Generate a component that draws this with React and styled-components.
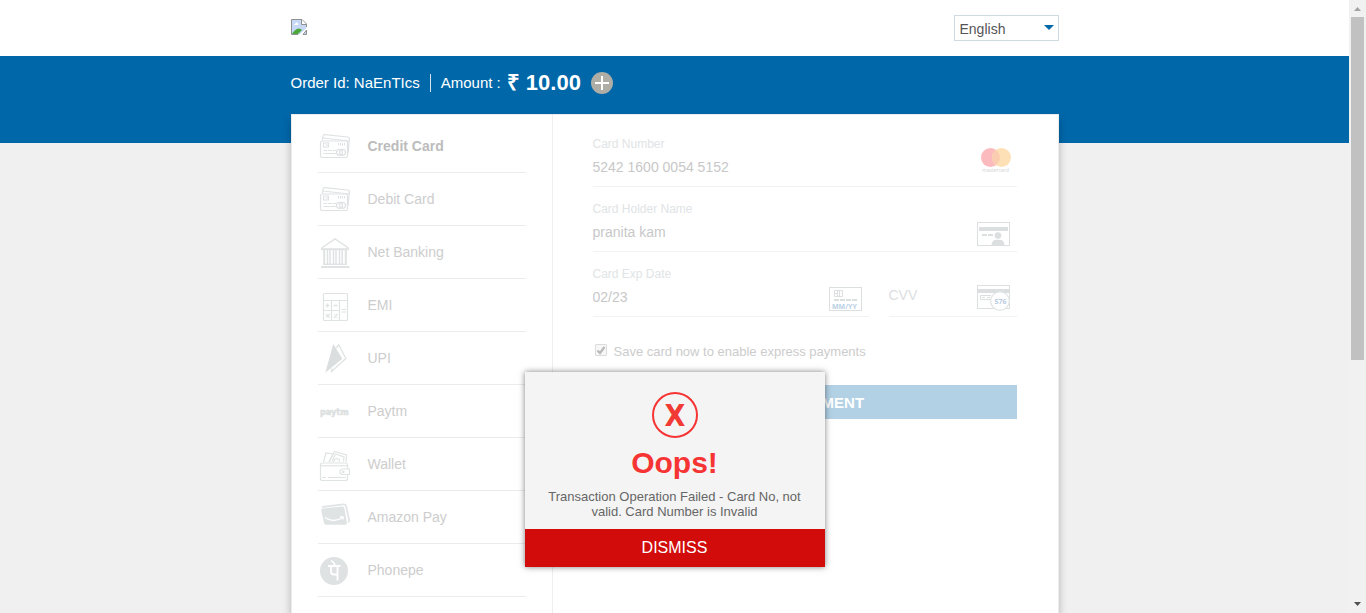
import React from "react";
import styled, { createGlobalStyle, css } from "styled-components";

const GlobalStyle = createGlobalStyle`
  *, *::before, *::after { box-sizing: border-box; }
  html, body { margin: 0; padding: 0; }
  body {
    background: #f0f0f0;
    font-family: "Liberation Sans", Arial, sans-serif;
    font-size: 14px;
    color: #555;
  }
  button, input, select { font-family: inherit; }
`;

const Page = styled.div`
  display: grid;
  grid-template-columns: 1fr 17px;
  height: 100vh;
  overflow: hidden;
`;

const Main = styled.main`
  min-width: 0;
  overflow: hidden;
`;

const Container = styled.div`
  display: flex;
  align-items: center;
  justify-content: ${(p) => (p.$between ? "space-between" : "flex-start")};
  width: 100%;
  max-width: 768px;
  margin: 0 auto;
`;

const Header = styled.header`
  display: flex;
  height: 56px;
  background: #fff;
`;

const Logo = styled.a`
  display: flex;
  padding-bottom: 2px;
`;

const LanguageBox = styled.div`
  position: relative;
  width: 105px;

  &::after {
    content: "";
    position: absolute;
    top: 10px;
    right: 5px;
    border: 5px solid transparent;
    border-top-color: #0067a9;
    border-bottom: 0;
    pointer-events: none;
  }
`;

const LanguageSelect = styled.select`
  display: block;
  width: 100%;
  height: 26px;
  padding: 1px 5px 0;
  border: 1px solid #cfdbe1;
  border-radius: 0;
  background: #fff;
  color: #555;
  font-size: 14px;
  appearance: none;
`;

const OrderBar = styled.section`
  height: 87px;
  padding-top: 15px;
  background: #0067a9;
  color: #fff;
  font-size: 15px;
  line-height: 24px;
`;

const OrderId = styled.span`
  padding-right: 10px;
`;

const Divider = styled.span`
  width: 1px;
  height: 18px;
  margin-right: 10px;
  background: #d5e3ec;
`;

const Amount = styled.strong`
  margin: 0 10px 0 6px;
  font-size: 22px;
`;

const PlusButton = styled.button`
  display: flex;
  padding: 0;
  border: 0;
  background: none;
`;

const Card = styled.div`
  position: relative;
  display: grid;
  grid-template-columns: 261px 1fr;
  width: 100%;
  max-width: 768px;
  min-height: 620px;
  margin: -29px auto 0;
  border: 1px solid #ececec;
  background: #fff;
  box-shadow: 0 6px 8px rgba(0, 0, 0, 0.25);
`;

const Methods = styled.nav`
  padding: 5px 26px 0;
  border-right: 1px solid #eee;
`;

const MethodList = styled.ul`
  margin: 0;
  padding: 0;
  list-style: none;
`;

const MethodLink = styled.a`
  display: flex;
  align-items: center;
  gap: 17px;
  height: 53px;
  padding-left: 1px;
  border-bottom: 1px solid #ececec;
  color: #cdcdcd;
  text-decoration: none;
  ${(p) =>
    p.$active &&
    css`
      color: #bcbcbc;
      font-weight: bold;
    `}
`;

const Form = styled.form`
  display: flex;
  flex-direction: column;
  padding: 7px 41px 0 40px;
`;

const FieldRow = styled.div`
  display: flex;
  gap: 20px;
`;

const Field = styled.div`
  display: flex;
  align-items: flex-end;
  flex: ${(p) => (p.$grow ? "1 1 0" : "0 0 276px")};
  min-width: 0;
  height: 65px;
  padding: 0 6px 3px 0;
  border-bottom: 1px solid #f2f2f2;
`;

const FieldText = styled.div`
  display: flex;
  flex: 1;
  flex-direction: column;
  gap: 5px;
  min-width: 0;
  padding-bottom: ${(p) => (p.$solo ? "8px" : "6px")};
`;

const FieldLabel = styled.label`
  color: #e0e4e6;
  font-size: 12px;
  line-height: 16px;
`;

const TextInput = styled.input`
  width: 100%;
  height: 20px;
  padding: 0;
  border: 0;
  outline: 0;
  background: none;
  color: #c8c8c8;
  font-size: 14px;

  &::placeholder {
    color: #dce0e3;
    opacity: 1;
  }
`;

const SaveRow = styled.div`
  display: flex;
  align-items: center;
  gap: 7px;
  margin-top: 27px;
  padding-left: 2px;
  font-size: 13px;
  line-height: 16px;
`;

const SaveLabel = styled.label`
  color: #ccc;
`;

const TickBox = styled.span`
  display: grid;
  width: 12px;
  height: 12px;
  margin-bottom: 4px;

  & > * {
    grid-area: 1 / 1;
  }

  & > svg {
    pointer-events: none;
  }
`;

const Tick = styled.input`
  width: 12px;
  height: 12px;
  margin: 0;
  border: 1px solid #dcdcdc;
  border-radius: 1px;
  background: #f7f7f7;
  appearance: none;
`;

const PayButton = styled.button`
  height: 34px;
  margin-top: 25px;
  padding: 0;
  border: 0;
  background: #b2d1e5;
  color: #fff;
  font-size: 15px;
  font-weight: bold;
`;

const Dialog = styled.div`
  position: absolute;
  top: 257px;
  left: 0;
  right: 0;
  display: flex;
  flex-direction: column;
  width: 300px;
  margin: 0 auto;
  background: #f4f4f4;
  box-shadow: 0 0 6px rgba(0, 0, 0, 0.5);
  text-align: center;
`;

const DialogBody = styled.div`
  display: flex;
  flex-direction: column;
  align-items: center;
  padding: 20px 20px 10px;
`;

const DialogTitle = styled.h2`
  margin: 8px 0 9px;
  color: #f63434;
  font-size: 30px;
  line-height: 34px;
`;

const DialogText = styled.p`
  margin: 0;
  color: #666;
  font-size: 13px;
  line-height: 15px;
`;

const DismissButton = styled.button`
  height: 38px;
  padding: 0;
  border: 0;
  background: #d20c0b;
  color: #fff;
  font-size: 16px;
`;

const Rail = styled.aside`
  display: flex;
  flex-direction: column;
  align-items: center;
  justify-content: space-between;
  background: #f1f1f1;
`;

const RailThumb = styled.div`
  width: 13px;
  height: 56vh;
  background: #c1c1c1;
`;

const RailStart = styled.div`
  display: flex;
  flex-direction: column;
  align-items: center;
`;

const RailArrow = styled.svg`
  display: block;
  width: 17px;
  height: 17px;
`;

function BrokenImage() {
  return (
    <svg width="16" height="16" viewBox="0 0 16 16" role="img" aria-label="Merchant logo">
      <path d="M.5.5H11L15.500 5V9L8.500 15.500H.5Z" fill="#c6d8f5" />
      <path d="M3 6q0-1.500 1.500-1.500Q5 3 6 3.500Q7.500 4 7.500 6Z" fill="#fff" />
      <path d="M1 15Q4 10 7.500 9.500Q10 9.500 11 11L7 15Z" fill="#4ca83b" />
      <path d="M15.500 8V5L11 .5H.5V15.500H7" fill="none" stroke="#909090" />
      <path d="M10.500.5V5.500H15.500" fill="#fff" stroke="#909090" />
      <path d="M12 15.500H15.500V11Z" fill="#c6d8f5" stroke="#909090" />
    </svg>
  );
}

function PlusIcon() {
  return (
    <svg width="22" height="22" viewBox="0 0 22 22" aria-hidden="true">
      <circle cx="11" cy="11" r="11" fill="#aeada6" />
      <path d="M11 4V18M4 11H18" stroke="#fff" strokeWidth="2" />
    </svg>
  );
}

function CardsIcon() {
  return (
    <g fill="none" stroke="#dfe2e3">
      <path d="M3.500 12.500L4 8Q4.200 6.500 6 6.700L28.500 9Q30.600 9.300 30.400 11L29 25" strokeWidth="1.200" />
      <path d="M4 10L30 13" strokeWidth="1" />
      <rect x="1.500" y="13" width="27" height="16.500" rx="1.800" fill="#fff" strokeWidth="1.200" />
      <rect x="4.500" y="15" width="5" height="4" strokeWidth="1" />
      <path d="M6.500 17H9" strokeWidth="1" />
      <path d="M19.500 15V17.500M21.500 15V17.500M23.500 15V17.500M25.500 15V17.500" />
      <path d="M4.500 22.500H8M9 22.500H13M14 22.500H17.500M4.500 25.500H17" />
      <circle cx="20.500" cy="24.300" r="3" strokeWidth="1.200" />
      <circle cx="23.500" cy="24.300" r="3" strokeWidth="1.200" />
    </g>
  );
}

function BankIcon() {
  return (
    <g fill="none" stroke="#e0e3e3">
      <path d="M2.500 14L16 5L29.500 14" strokeWidth="1.500" />
      <path d="M2 15.200H30" strokeWidth="2" />
      <path d="M5.200 16V30M26.800 16V30" strokeWidth="2" />
      <path d="M8.500 16V30M11 16V30M14.500 16V30M17 16V30M20.500 16V30M23.200 16V30" strokeWidth="1.500" />
      <path d="M4 30.300H28" strokeWidth="1.400" />
      <path d="M2 33H30.500" strokeWidth="2" />
    </g>
  );
}

function CalculatorIcon() {
  return (
    <g fill="none" stroke="#e0e3e3" strokeWidth="1.200">
      <rect x="4.500" y="6.500" width="24" height="27" rx="1" />
      <path d="M4.500 13.500H28.500M12.500 13.500V33.500M20.500 13.500V33.500M4.500 23.500H20.500" />
      <path d="M6.500 18.500H10.500M8.500 16.500V20.500M14.500 18.500H18.500" strokeWidth="1.400" />
      <path d="M7 27L10.500 30.500M10.500 27L7 30.500M15 31L18.500 27M15 27.500H16M17.500 30.500H18.500" strokeWidth="1.200" />
      <path d="M22.500 22.500H27M22.500 25H27" />
    </g>
  );
}

function UpiIcon() {
  return (
    <g>
      <path d="M14.300 4L23.300 18.700L6.300 32.700Z" fill="#dadedf" />
      <path d="M17.300 8L19.700 4.800L26.800 18.500L12 32L13.200 28.500" fill="none" stroke="#e0e3e3" strokeWidth="1.300" />
    </g>
  );
}

function PaytmIcon() {
  return (
    <text x="1" y="22" fill="#dcdfe0" stroke="#dcdfe0" strokeWidth="0.500" fontFamily="DejaVu Sans Condensed, DejaVu Sans, sans-serif" fontSize="9" fontWeight="bold">
      paytm
    </text>
  );
}

function WalletIcon() {
  return (
    <g fill="none" stroke="#e0e3e3" strokeWidth="1.200">
      <path d="M4.500 16L7 7L14 8L10 16" />
      <path d="M10 16L15.500 5.500L27.500 9L27 16" />
      <path d="M13 15.500L16.500 8L25 11L24.500 15.500" />
      <path d="M14.500 16Q16 11.500 19.500 13Q21 14 20.500 16" />
      <path d="M28.500 23V19Q28.500 17 26.500 17H3.500Q1.500 17 1.500 19V32.500Q1.500 34.500 3.500 34.500H26.500Q28.500 34.500 28.500 32.500V28.500" />
      <path d="M2 19.800H28" />
      <path d="M3.500 31.500H7M9 31.500H27" />
      <path d="M30.500 23H23.500Q21 23.500 21 25.700Q21 28 23.500 28.500H30.500Z" />
      <circle cx="24.300" cy="25.800" r="0.800" />
    </g>
  );
}

function AmazonPayIcon() {
  return (
    <g>
      <path d="M3 8L24.500 5.300Q26.500 5.200 27 7L30.300 21.500Q30 22.800 29 23" fill="none" stroke="#e2e5e6" strokeWidth="1.800" />
      <path d="M2.300 11.500Q2 9.800 4 9.600L23 7.600Q25 7.500 25.400 9.500L28 24Q28 25.700 26.500 25.700H7Q5.300 25.700 5 24Z" fill="#dfe3e4" />
      <path d="M6 18.500Q14 24.500 24 18.500M21 17.700L24.300 18L23.500 20.500" fill="none" stroke="#fff" strokeWidth="1.400" />
    </g>
  );
}

function PhonePeIcon() {
  return (
    <g>
      <circle cx="15" cy="19" r="14" fill="#dfe2e3" />
      <path d="M12 8.500Q15 10 16 13.500M9 14H21.500M12 14V19.500Q12 22.500 15 22.500H18.500M18.500 14V28.500" fill="none" stroke="#fff" strokeWidth="1.800" />
    </g>
  );
}

function MastercardIcon() {
  return (
    <g>
      <circle cx="13.500" cy="14.500" r="9.500" fill="#fbbabd" />
      <circle cx="24.500" cy="14.500" r="9.500" fill="#fee0b6" />
      <path d="M19 6.800A9.500 9.500 0 0 1 19 22.200A9.500 9.500 0 0 1 19 6.800Z" fill="#fbcdb0" />
      <text x="5" y="29" fill="#cfd1d2" fontFamily="Open Sans, sans-serif" fontSize="5">
        mastercard
      </text>
    </g>
  );
}

function HolderIcon() {
  return (
    <g>
      <rect x="0.500" y="14.500" width="32" height="23" fill="#fff" stroke="#dcdfe0" />
      <path d="M2 19H31V23H2ZM5 26H10V28H5ZM11 26H16V28H11Z" fill="#dcdfe0" />
      <circle cx="21" cy="27.500" r="3.300" fill="#dcdfe0" />
      <path d="M14.500 38Q14.500 32 19 31.800H23Q27.500 32 27.500 38Z" fill="#dcdfe0" />
    </g>
  );
}

function ExpiryIcon() {
  return (
    <g>
      <rect x="0.500" y="14.500" width="32" height="23" fill="#fff" stroke="#dcdfe0" />
      <path d="M5.500 17.500H13.500V23.500H5.500ZM8.500 17.500V23.500M10.500 17.500V23.500M5.500 20.500H8.500" fill="none" stroke="#dcdfe0" />
      <path d="M5 27H28" stroke="#dcdfe0" strokeWidth="2" strokeDasharray="5 1" />
      <text x="3" y="35.500" fill="#b9d0e4" fontFamily="Open Sans, sans-serif" fontSize="7" fontWeight="bold">
        MM/YY
      </text>
    </g>
  );
}

function CvvIcon() {
  return (
    <g>
      <rect x="0.500" y="12.500" width="32" height="23" fill="#fff" stroke="#dcdfe0" />
      <path d="M1 16H32V20H1Z" fill="#dcdfe0" />
      <path d="M14 22.500H3.500V26.500H14M5 24.500H8M10 24.500H13" fill="none" stroke="#dcdfe0" />
      <circle cx="23" cy="28" r="9.300" fill="#fff" stroke="#e0e3e3" strokeWidth="1.200" />
      <text x="17.500" y="30.500" fill="#b9cbe0" fontFamily="Open Sans, sans-serif" fontSize="7" fontWeight="bold">
        576
      </text>
    </g>
  );
}

function ErrorIcon() {
  return (
    <svg width="46" height="46" viewBox="0 0 46 46" aria-hidden="true">
      <circle cx="23" cy="23" r="22" fill="none" stroke="#f63434" strokeWidth="2" />
      <text x="23" y="34" textAnchor="middle" fill="#f23a34" fontFamily="DejaVu Sans Condensed, DejaVu Sans, sans-serif" fontSize="30" fontWeight="bold">
        X
      </text>
    </svg>
  );
}

const FieldIcon = ({ children }) => (
  <svg width="34" height="40" viewBox="0 0 34 40" aria-hidden="true">
    {children}
  </svg>
);

const methods = [
  { name: "Credit Card", Icon: CardsIcon },
  { name: "Debit Card", Icon: CardsIcon },
  { name: "Net Banking", Icon: BankIcon },
  { name: "EMI", Icon: CalculatorIcon },
  { name: "UPI", Icon: UpiIcon },
  { name: "Paytm", Icon: PaytmIcon },
  { name: "Wallet", Icon: WalletIcon },
  { name: "Amazon Pay", Icon: AmazonPayIcon },
  { name: "Phonepe", Icon: PhonePeIcon },
];

export default function App() {
  return (
    <>
      <GlobalStyle />
      <Page>
        <Main>
          <Header>
            <Container $between>
              <Logo href="#">
                <BrokenImage />
              </Logo>
              <LanguageBox>
                <LanguageSelect aria-label="Language" defaultValue="en">
                  <option value="en">English</option>
                </LanguageSelect>
              </LanguageBox>
            </Container>
          </Header>

          <OrderBar>
            <Container>
              <OrderId>Order Id: NaEnTIcs</OrderId>
              <Divider />
              <span>Amount :</span>
              <Amount>₹ 10.00</Amount>
              <PlusButton type="button" aria-label="Show order details">
                <PlusIcon />
              </PlusButton>
            </Container>
          </OrderBar>

          <Card>
            <Methods aria-label="Payment methods">
              <MethodList>
                {methods.map(({ name, Icon }, i) => (
                  <li key={name}>
                    <MethodLink href="#" $active={i === 0}>
                      <svg width="32" height="36" viewBox="0 0 32 36" aria-hidden="true">
                        <Icon />
                      </svg>
                      {name}
                    </MethodLink>
                  </li>
                ))}
              </MethodList>
            </Methods>

            <Form onSubmit={(e) => e.preventDefault()}>
              <FieldRow>
                <Field $grow>
                  <FieldText>
                    <FieldLabel htmlFor="number">Card Number</FieldLabel>
                    <TextInput id="number" defaultValue="5242 1600 0054 5152" />
                  </FieldText>
                  <FieldIcon>
                    <MastercardIcon />
                  </FieldIcon>
                </Field>
              </FieldRow>
              <FieldRow>
                <Field $grow>
                  <FieldText>
                    <FieldLabel htmlFor="holder">Card Holder Name</FieldLabel>
                    <TextInput id="holder" defaultValue="pranita kam" />
                  </FieldText>
                  <FieldIcon>
                    <HolderIcon />
                  </FieldIcon>
                </Field>
              </FieldRow>
              <FieldRow>
                <Field>
                  <FieldText>
                    <FieldLabel htmlFor="expiry">Card Exp Date</FieldLabel>
                    <TextInput id="expiry" defaultValue="02/23" />
                  </FieldText>
                  <FieldIcon>
                    <ExpiryIcon />
                  </FieldIcon>
                </Field>
                <Field $grow>
                  <FieldText $solo>
                    <TextInput aria-label="CVV" placeholder="CVV" />
                  </FieldText>
                  <FieldIcon>
                    <CvvIcon />
                  </FieldIcon>
                </Field>
              </FieldRow>
              <SaveRow>
                <TickBox>
                  <Tick id="save" type="checkbox" defaultChecked />
                  <svg width="12" height="12" viewBox="0 0 12 12" aria-hidden="true">
                    <path d="M2.500 6.500L5 9L9.500 3" fill="none" stroke="#b9b9b9" strokeWidth="2.200" />
                  </svg>
                </TickBox>
                <SaveLabel htmlFor="save">Save card now to enable express payments</SaveLabel>
              </SaveRow>
              <PayButton type="submit">MAKE PAYMENT</PayButton>
            </Form>

            <Dialog role="alertdialog" aria-labelledby="error-title" aria-describedby="error-text">
              <DialogBody>
                <ErrorIcon />
                <DialogTitle id="error-title">Oops!</DialogTitle>
                <DialogText id="error-text">
                  Transaction Operation Failed - Card No, not valid. Card Number is Invalid
                </DialogText>
              </DialogBody>
              <DismissButton type="button">DISMISS</DismissButton>
            </Dialog>
          </Card>
        </Main>

        <Rail aria-hidden="true">
          <RailStart>
            <RailArrow viewBox="0 0 17 17">
              <path d="M5 11L8.500 7L12 11Z" fill="#a3a3a3" />
            </RailArrow>
            <RailThumb />
          </RailStart>
          <RailArrow viewBox="0 0 17 17">
            <path d="M5 6L8.500 10L12 6Z" fill="#505050" />
          </RailArrow>
        </Rail>
      </Page>
    </>
  );
}
